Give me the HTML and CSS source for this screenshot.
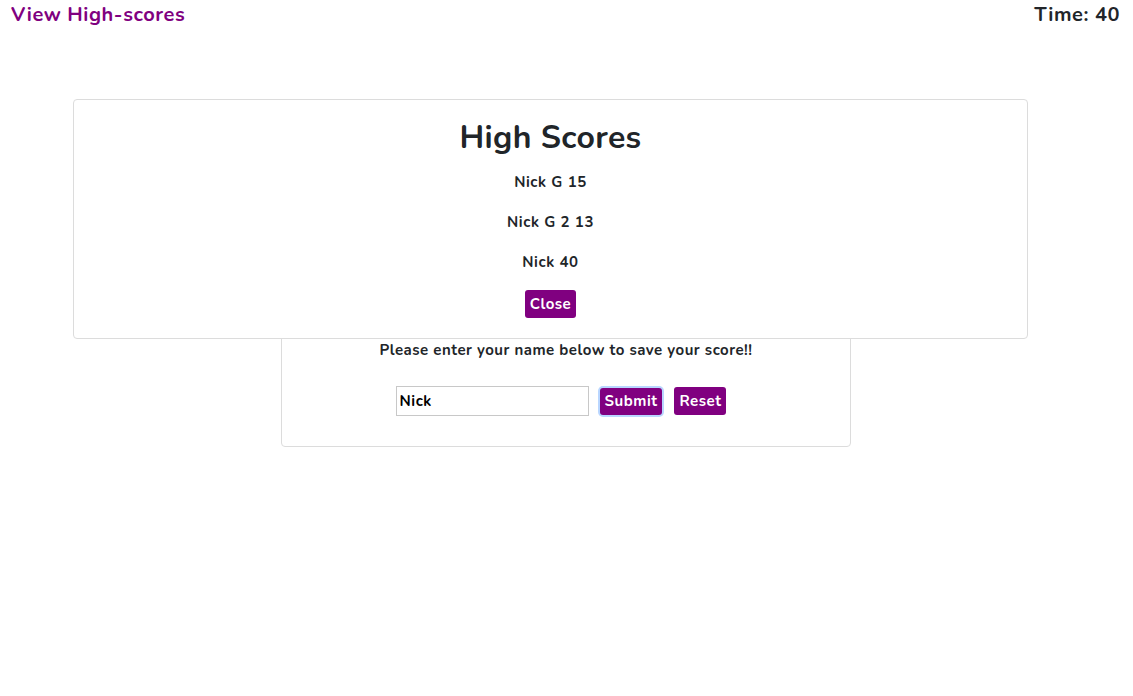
FILE: index.html
```html
<!DOCTYPE html>
<html>
<head>
<meta charset="utf-8">
<link rel="stylesheet" href="styles.css">
</head>
<body>
<header class="topbar">
  <a class="hs-link" href="#">View High-scores</a>
  <span class="timer">Time: 40</span>
</header>
<main class="main">
  <section class="card save-card">
    <p class="prompt">Please enter your name below to save your score!!</p>
    <form class="save-form">
      <input class="name-input" type="text" value="Nick">
      <button type="button" class="btn btn-focus">Submit</button>
      <button type="button" class="btn">Reset</button>
    </form>
  </section>
  <section class="card modal">
    <h2 class="modal-title">High Scores</h2>
    <p class="score">Nick G 15</p>
    <p class="score">Nick G 2 13</p>
    <p class="score">Nick 40</p>
    <button type="button" class="btn">Close</button>
  </section>
</main>
</body>
</html>
```
FILE: styles.css
```css
* { box-sizing: border-box; }
body {
  margin: 0;
  font-family: "Nunito", "Lato", "Noto Sans", sans-serif;
  color: #212529;
  background: #fff;
}
.topbar {
  display: flex;
  justify-content: space-between;
  align-items: center;
  padding: 1px 13px 0 11px;
  height: 28px;
  font-size: 20px;
  font-weight: 700;
  letter-spacing: 0.55px;
}
.hs-link { color: #800080; text-decoration: none; }
.timer { color: #212529; }
.main {
  position: relative;
  padding-top: 272px;
}
.card {
  background: #fff;
  border: 1px solid #dcdcdc;
  border-radius: 4px;
}
.save-card {
  width: 570px;
  margin: 0 0 0 281px;
  padding: 39px 0 30px;
  text-align: center;
}
.prompt {
  margin: 0 0 26px;
  font-size: 15px;
  font-weight: 700;
  line-height: 20px;
  letter-spacing: 0.5px;
}
.save-form {
  display: flex;
  justify-content: center;
  align-items: center;
  margin-left: -10px;
}
.name-input {
  width: 193px;
  height: 30px;
  border: 1px solid #c8c8c8;
  padding: 0 3px;
  font: 700 15px "Nunito", "Lato", "Noto Sans", sans-serif;
  letter-spacing: 0.5px;
  color: #000;
  margin-right: 11px;
}
.btn {
  background: #800080;
  color: #fff;
  border: none;
  border-radius: 3px;
  font: 700 15px "Nunito", "Lato", "Noto Sans", sans-serif;
  letter-spacing: 0.5px;
  padding: 0 5px;
  height: 28px;
  cursor: pointer;
}
.btn-focus {
  box-shadow: 0 0 0 2px #b9d6ff;
  height: 27px;
  margin-right: 12px;
}
.modal {
  position: absolute;
  top: 71px;
  left: 73px;
  width: 955px;
  height: 240px;
  text-align: center;
  padding-top: 18px;
}
.modal-title {
  margin: 0 0 14px;
  font-size: 32px;
  line-height: 40px;
  font-weight: 700;
  letter-spacing: 0.35px;
}
.score {
  margin: 0 0 20px;
  font-size: 15px;
  font-weight: 700;
  line-height: 20px;
  letter-spacing: 0.6px;
}
.modal .btn { margin-top: -2px; }
```
